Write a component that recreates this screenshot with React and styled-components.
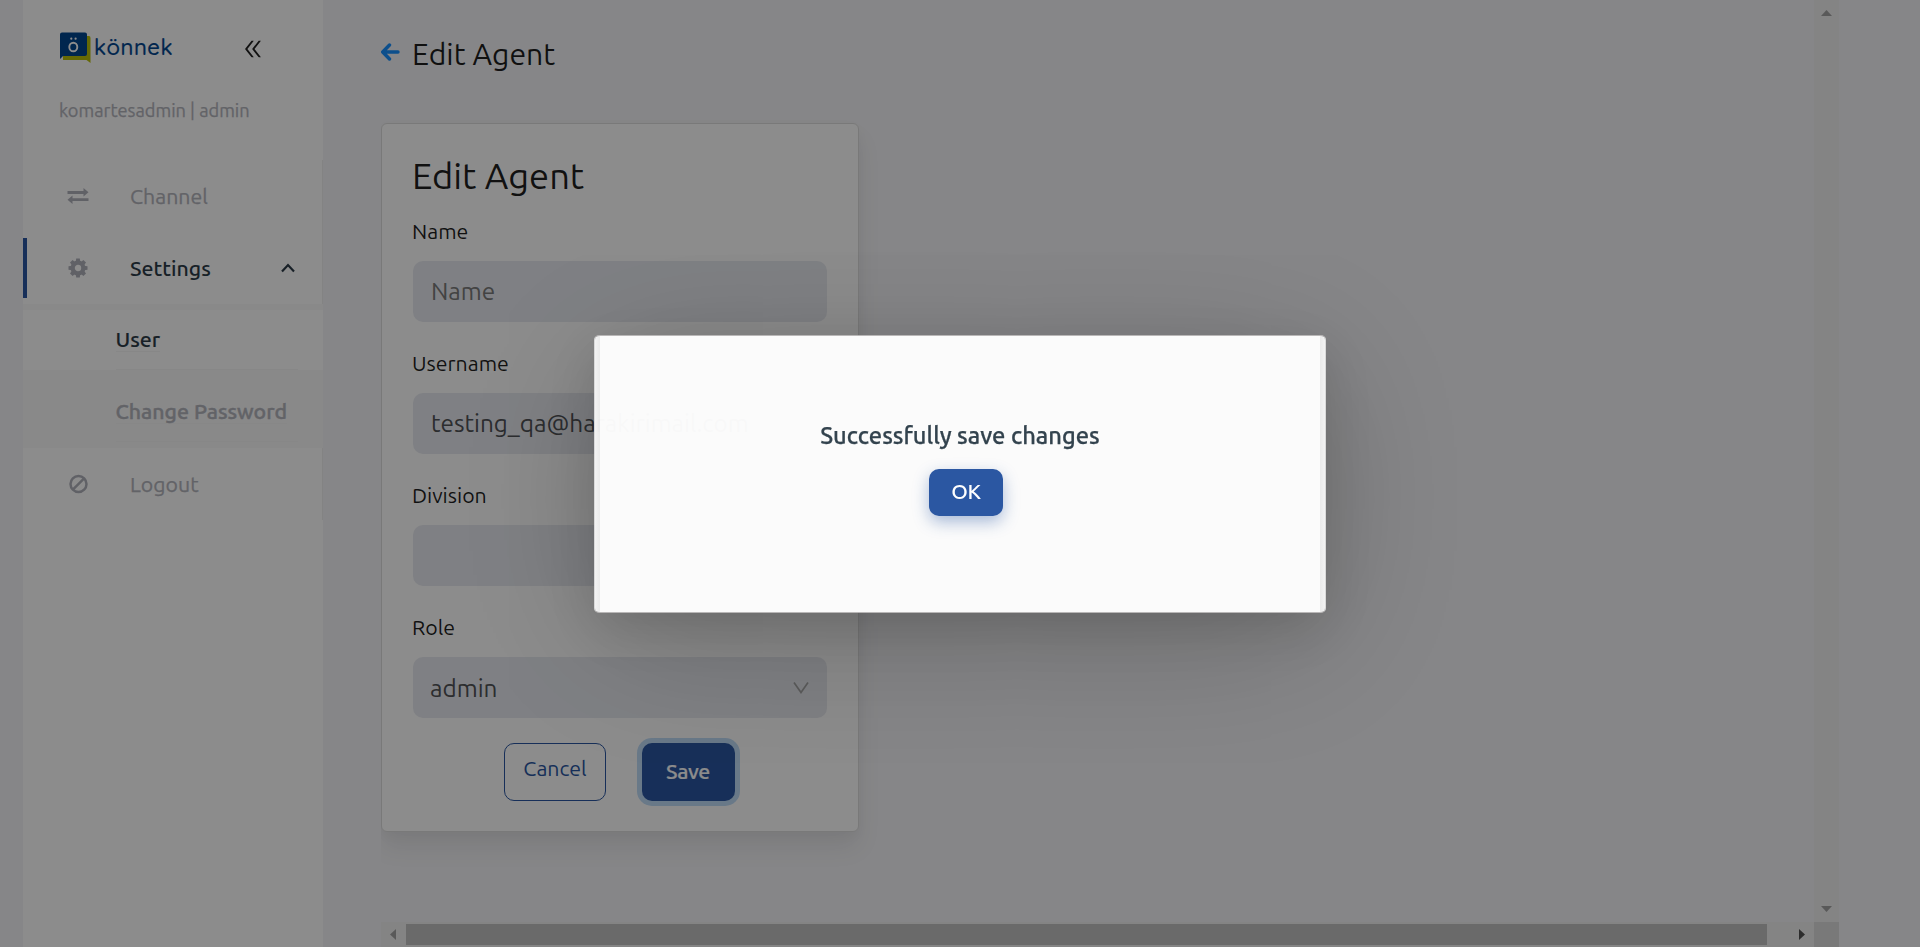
import React from "react";
import styled, { createGlobalStyle } from "styled-components";
import { AiOutlineDoubleLeft } from "react-icons/ai";

const GlobalStyle = createGlobalStyle`
  *, *::before, *::after { box-sizing: border-box; }
  body {
    margin: 0;
    background: #f4f4f7;
    color: rgba(0, 0, 0, 0.88);
    font-family: Ubuntu, "Noto Sans", "Open Sans", sans-serif;
    font-size: 21.3px;
    overflow: hidden;
  }
`;

const Page = styled.div`
  display: flex;
  width: 1920px;
  height: 947px;
  padding-left: 23px;
  overflow: hidden;
`;

const Sidebar = styled.aside`
  flex: none;
  display: flex;
  flex-direction: column;
  width: 300px;
  background: #fff;
`;

const Brand = styled.div`
  display: flex;
  align-items: flex-start;
  justify-content: space-between;
  height: 97px;
  padding: 31px 58px 0 36px;
`;

const Logo = styled.div`
  display: flex;
  align-items: flex-start;
  color: #01458f;
`;

const LogoMark = styled.svg`
  display: block;
  width: 32px;
  height: 33px;
`;

const LogoName = styled.span`
  margin-left: 3px;
  font-family: Quicksand, Nunito, Lato, sans-serif;
  font-size: 22px;
  font-weight: 500;
  line-height: 33px;
  letter-spacing: 0.55px;
  -webkit-text-stroke: 0.2px currentColor;
`;

const CollapseIcon = styled(AiOutlineDoubleLeft)`
  width: 24px;
  height: 24px;
  margin-top: 6px;
`;

const Account = styled.div`
  height: 63px;
  padding: 0 36px;
  color: #b3b4bc;
  font-size: 18.2px;
  line-height: 26px;
  -webkit-text-stroke: 0.25px currentColor;
`;

const Nav = styled.nav`
  display: flex;
  flex-direction: column;
  height: 360px;
  border-right: 1px solid #eeeeee;
`;

const NavItem = styled.a`
  display: flex;
  align-items: center;
  height: 60px;
  margin: 6px 0;
  padding: 0 27px 0 ${(p) => (p.$active ? 41 : 44)}px;
  border-left: ${(p) => (p.$active ? "4px solid #2b57a2" : "none")};
  color: ${(p) => (p.$active ? "#2c3b48" : "#b3b4bc")};
  font-weight: ${(p) => (p.$active ? 500 : 400)};
  -webkit-text-stroke: ${(p) => (p.$active ? 0 : 0.25)}px currentColor;
`;

const NavLabel = styled.span`
  flex: 1;
`;

const NavIcon = styled.span`
  display: flex;
  width: ${(p) => (p.$narrow ? 62 : 63)}px;
  color: #b0b1bb;
`;

const SubMenu = styled.div`
  display: flex;
  flex-direction: column;
  height: 144px;
  margin-right: -1px;
  padding: 6px 0;
  background: #fafafa;
`;

const SubItem = styled.a`
  display: flex;
  height: 60px;
  margin-bottom: 12px;
  padding: 0 25px 0 93px;
  background: ${(p) => (p.$selected ? "#fff" : "transparent")};
  color: ${(p) => (p.$selected ? "#2c3b48" : "#b3b4bc")};
  font-weight: 500;
  -webkit-text-stroke: ${(p) => (p.$selected ? 0.1 : 0.4)}px currentColor;
`;

const SubText = styled.span`
  flex: 1;
  height: 60px;
  border-bottom: 1px solid #f6f6f6;
  line-height: 59px;
`;

const SubLabel = styled.span`
  display: inline-block;
  margin-left: -0.5px;
  border-bottom: 1px solid #f6f6f6;
  line-height: 24px;
`;

const Main = styled.main`
  flex: none;
  display: grid;
  grid-template-columns: 1433px 25px;
  grid-template-rows: 922px 25px;
  margin-left: 58px;
`;

const Content = styled.section`
  overflow: hidden;
`;

const PageHeader = styled.header`
  display: flex;
  align-items: center;
  height: 123px;
  padding-bottom: 16px;
`;

const BackIcon = styled.svg`
  width: 19px;
  height: 20px;
  margin: -3px 12px 0 0;
`;

const PageTitle = styled.h1`
  margin: 0;
  font-size: 30.2px;
  font-weight: 400;
  line-height: 46px;
`;

const Card = styled.div`
  width: 478px;
  height: 709px;
  padding: 24px 31px 0;
  border: 1px solid #dddddd;
  border-radius: 6px;
  background: #fff;
  box-shadow: 0 16px 24px rgba(0, 0, 0, 0.07), 0 4px 12px rgba(0, 0, 0, 0.03);
`;

const CardTitle = styled.h2`
  margin: 0 0 1px -1px;
  font-size: 36.3px;
  font-weight: 400;
  line-height: 56px;
`;

const Field = styled.label`
  display: block;
  height: 132px;
  padding-top: 10px;
`;

const FieldLabel = styled.span`
  display: block;
  height: 46px;
  margin-left: -1px;
  line-height: 32px;
`;

const Control = styled.span`
  display: flex;
  align-items: center;
  justify-content: space-between;
  height: 61px;
  padding: 0 ${(p) => (p.$select ? "18px 0 17px" : "18px 2px")};
  border-radius: 10px;
  background: #e8eaf0;
  color: ${(p) => (p.$placeholder ? "#7a7a7a" : "#505256")};
  font-size: 24.3px;
`;

const Actions = styled.div`
  display: flex;
  gap: 36px;
  margin-top: 10px;
  padding-left: 91px;
`;

const Button = styled.button`
  height: 58px;
  border-radius: 10px;
  font-family: inherit;
  font-size: 21.3px;
`;

const CancelButton = styled(Button)`
  width: 102px;
  padding: 0 0 9px;
  border: 1px solid #2b57a2;
  background: transparent;
  color: #2b57a2;
`;

const SaveButton = styled(Button)`
  width: 93px;
  padding: 0 1px 2px 0;
  border: 0;
  background: #2b57a2;
  color: #fff;
  font-weight: 500;
  letter-spacing: -0.4px;
  -webkit-text-stroke: 0.2px currentColor;
  box-shadow: 0 0 0 5px #bfdcf8;
`;

const VerticalBar = styled.div`
  display: flex;
  flex-direction: column;
  align-items: center;
  justify-content: space-between;
  padding: 10px 0;
  background: #f0f0f0;
`;

const HorizontalBar = styled.div`
  display: flex;
  align-items: center;
  padding: 0 9px;
  background: #f1f1f1;
`;

const Thumb = styled.div`
  flex: none;
  width: 1361px;
  height: 21px;
  margin: 0 32px 0 10px;
  background: #c1c1c1;
`;

const BarArrow = styled.svg`
  flex: none;
  display: block;
  fill: ${(p) => (p.$dark ? "#505050" : "#a3a3a3")};
`;

const Corner = styled.div`
  background: #dcdcdc;
`;

const Overlay = styled.div`
  position: fixed;
  inset: 0;
  display: flex;
  align-items: flex-start;
  justify-content: center;
  padding-top: 335px;
  background: rgba(0, 0, 0, 0.45);
`;

const Dialog = styled.div`
  width: 732px;
  height: 278px;
  padding: 0 5px;
  border: 1px solid;
  border-color: rgba(190, 188, 188, 0.9) rgba(225, 225, 225, 0.9);
  border-radius: 5px;
  background: linear-gradient(to right, rgba(0, 0, 0, 0.03), rgba(0, 0, 0, 0.07)) left / 5px 100% no-repeat,
    linear-gradient(to left, rgba(0, 0, 0, 0.03), rgba(0, 0, 0, 0.07)) right / 5px 100% no-repeat,
    rgba(255, 255, 255, 0.97);
  background-clip: padding-box;
  box-shadow: 0 26px 160px rgba(0, 0, 0, 0.2), 0 16px 55px rgba(0, 0, 0, 0.14);
`;

const DialogBody = styled.div`
  display: flex;
  flex-direction: column;
  align-items: center;
  height: 276px;
  padding-top: 84px;
`;

const Message = styled.p`
  margin: 0 0 19px;
  color: #33434e;
  font-size: 23.7px;
  font-weight: 500;
  line-height: 30px;
  -webkit-text-stroke: 0.25px currentColor;
`;

const OkButton = styled(Button)`
  width: 74px;
  height: 47px;
  margin-left: 12px;
  padding: 0 0 3px;
  border: 0;
  background: #2b57a2;
  color: #fff;
  font-weight: 500;
  letter-spacing: -0.2px;
  box-shadow: 0 6px 16px rgba(43, 87, 162, 0.4);
`;

const FIELDS = [
  { label: "Name", value: "Name", placeholder: true },
  { label: "Username", value: "testing_qa@harakirimail.com" },
  { label: "Division", value: "" },
  { label: "Role", value: "admin", select: true },
];

const ExchangeIcon = () => (
  <svg width="22" height="18" viewBox="0 0 22 18" fill="currentColor">
    <path d="M0.500 4H16.500V1L21.500 5.300L16.500 9.600V6.900H0.500Z" />
    <path d="M21.500 14.100H5.500V17L0.500 12.700L5.500 8.500V11.200H21.500Z" />
  </svg>
);

const GEAR_ANGLES = [0, 45, 90, 135, 180, 225, 270, 315];

const GearIcon = () => (
  <svg width="20" height="20" viewBox="0 0 20 20" fill="currentColor">
    <circle cx="10" cy="10" r="5.300" fill="none" stroke="currentColor" strokeWidth="4.200" />
    {GEAR_ANGLES.map((a) => (
      <path key={a} d="M7.700 4L8.200 0.500H11.800L12.300 4Z" transform={`rotate(${a} 10 10)`} />
    ))}
  </svg>
);

const BanIcon = () => (
  <svg width="21" height="20" viewBox="-2 0 21 20" fill="none" stroke="currentColor" strokeWidth="2.500">
    <circle cx="9.500" cy="10" r="8" />
    <path d="M4.100 15.400L14.900 4.600" />
  </svg>
);

const SelectArrow = () => (
  <svg width="16" height="12" viewBox="0 0 16 12" fill="none" stroke="#a6a6a6" strokeWidth="1.700">
    <path d="M1 0.500L8 10.500L15 0.500" />
  </svg>
);

export default function App() {
  return (
    <>
      <GlobalStyle />
      <Page>
        <Sidebar>
          <Brand>
            <Logo>
              <LogoMark viewBox="0 0 32 33">
                <path d="M4 5H30Q31.500 5 31.500 7V32L27.500 29H4Z" fill="#b9bf0a" />
                <path d="M3 1.500H26Q28 1.500 28 3.500V23Q28 25 26 25H4L1 28V3.500Q1 1.500 3 1.500Z" fill="#01458f" />
                <ellipse cx="14.300" cy="16" rx="4" ry="4.300" fill="none" stroke="#fff" strokeWidth="1.900" />
                <circle cx="12.300" cy="7.700" r="1.100" fill="#fff" />
                <circle cx="16.600" cy="7.700" r="1.100" fill="#fff" />
              </LogoMark>
              <LogoName>könnek</LogoName>
            </Logo>
            <CollapseIcon />
          </Brand>
          <Account>komartesadmin | admin</Account>
          <Nav>
            <NavItem>
              <NavIcon><ExchangeIcon /></NavIcon>
              <NavLabel>Channel</NavLabel>
            </NavItem>
            <NavItem $active>
              <NavIcon $narrow><GearIcon /></NavIcon>
              <NavLabel>Settings</NavLabel>
              <svg width="14" height="10" viewBox="0 0 14 10" fill="none" stroke="currentColor" strokeWidth="2.200">
                <path d="M1 8.500L7 2L13 8.500" />
              </svg>
            </NavItem>
            <SubMenu>
              <SubItem $selected><SubText><SubLabel>User</SubLabel></SubText></SubItem>
              <SubItem><SubText><SubLabel>Change Password</SubLabel></SubText></SubItem>
            </SubMenu>
            <NavItem>
              <NavIcon><BanIcon /></NavIcon>
              <NavLabel>Logout</NavLabel>
            </NavItem>
          </Nav>
        </Sidebar>
        <Main>
          <Content>
            <PageHeader>
              <BackIcon viewBox="1 0 19 20" fill="none" stroke="#1890ff" strokeWidth="3.400" strokeLinecap="round" strokeLinejoin="round">
                <path d="M18 10H3M9.500 3L2.700 10L9.500 17" />
              </BackIcon>
              <PageTitle>Edit Agent</PageTitle>
            </PageHeader>
            <Card>
              <CardTitle>Edit Agent</CardTitle>
              {FIELDS.map((f) => (
                <Field key={f.label}>
                  <FieldLabel>{f.label}</FieldLabel>
                  <Control $placeholder={f.placeholder} $select={f.select}>
                    {f.value}
                    {f.select && <SelectArrow />}
                  </Control>
                </Field>
              ))}
              <Actions>
                <CancelButton>Cancel</CancelButton>
                <SaveButton>Save</SaveButton>
              </Actions>
            </Card>
          </Content>
          <VerticalBar>
            <BarArrow width="11" height="6" viewBox="0 0 11 6"><path d="M0 6L5.500 0L11 6Z" /></BarArrow>
            <BarArrow width="11" height="6" viewBox="0 0 11 6"><path d="M0 0L5.500 6L11 0Z" /></BarArrow>
          </VerticalBar>
          <HorizontalBar>
            <BarArrow width="6" height="11" viewBox="0 0 6 11"><path d="M6 0L0 5.500L6 11Z" /></BarArrow>
            <Thumb />
            <BarArrow $dark width="6" height="11" viewBox="0 0 6 11"><path d="M0 0L6 5.500L0 11Z" /></BarArrow>
          </HorizontalBar>
          <Corner />
        </Main>
      </Page>
      <Overlay>
        <Dialog>
          <DialogBody>
            <Message>Successfully save changes</Message>
            <OkButton>OK</OkButton>
          </DialogBody>
        </Dialog>
      </Overlay>
    </>
  );
}
